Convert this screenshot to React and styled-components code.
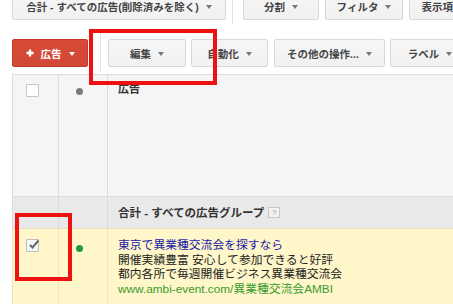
import React from "react";
import styled, { createGlobalStyle } from "styled-components";

const Global = createGlobalStyle`
  html, body { margin: 0; padding: 0; background: #fff; overflow: hidden; }
  body { font-family: "Liberation Sans", "Noto Sans CJK JP", sans-serif; }
`;

const Page = styled.div`
  position: relative;
  width: 453px;
  height: 304px;
  overflow: hidden;
  padding-left: 12px;
  box-sizing: border-box;
`;

const Toolbar = styled.div`
  display: flex;
  align-items: stretch;
  height: 28px;
  margin-top: ${(p) => p.$mt}px;
  white-space: nowrap;
`;

const Button = styled.div`
  flex: none;
  width: ${(p) => p.$w}px;
  margin-left: ${(p) => p.$ml || 0}px;
  box-sizing: border-box;
  display: flex;
  align-items: center;
  justify-content: center;
  gap: 7px;
  border: 1px solid ${(p) => (p.$primary ? "#c53727" : "#d9d9d9")};
  border-radius: 2px;
  background: ${(p) =>
    p.$primary ? "linear-gradient(#d94a38, #d14836)" : "linear-gradient(#f6f6f6, #f1f1f1)"};
  color: ${(p) => (p.$primary ? "#fff" : "#444")};
  font-size: 10.5px;
  font-weight: bold;
`;

const Caret = styled.span`
  width: 0;
  height: 0;
  border-left: 3.5px solid transparent;
  border-right: 3.5px solid transparent;
  border-top: 4px solid ${(p) => (p.$light ? "#fff" : "#777")};
  margin-top: 1px;
`;

const Separator = styled.div`
  flex: none;
  width: 1px;
  background: #e3e3e3;
  margin: -6px ${(p) => p.$mr}px -4px ${(p) => p.$ml}px;
`;

const Table = styled.div`
  margin-top: 7px;
  border-top: 1px solid #dcdcdc;
  width: 460px;
`;

const Row = styled.div`
  display: grid;
  grid-template-columns: 46px 49px 1fr;
  height: ${(p) => p.$h}px;
  background: ${(p) => p.$bg};
  border-bottom: 1px solid ${(p) => p.$line || "#dcdcdc"};
  box-sizing: border-box;
`;

const Cell = styled.div`
  border-left: 1px solid ${(p) => p.$line || "#dcdcdc"};
  padding: ${(p) => p.$pad};
  box-sizing: border-box;
  display: flex;
  flex-direction: column;
  align-items: flex-start;
  justify-content: ${(p) => (p.$center ? "center" : "flex-start")};
`;

const Checkbox = styled.div`
  width: 13px;
  height: 13px;
  box-sizing: border-box;
  border: 1px solid ${(p) => (p.$checked ? "#bdbdbd" : "#c6c6c6")};
  background: ${(p) => (p.$checked ? "#f7f7f7" : "#fff")};
  border-radius: 1px;
  position: relative;
  svg { position: absolute; left: 1px; top: -1px; }
`;

const Dot = styled.div`
  width: 7px;
  height: 7px;
  border-radius: 50%;
  background: ${(p) => p.$color};
`;

const HeadText = styled.div`
  font-size: 11px;
  font-weight: bold;
  color: #333;
  line-height: 14px;
`;

const GroupText = styled.div`
  display: flex;
  align-items: center;
  gap: 4px;
  font-size: 11.5px;
  font-weight: bold;
  color: #333;
`;

const Help = styled.span`
  width: 12px;
  height: 11px;
  box-sizing: border-box;
  border: 1px solid #c8c8c8;
  background: #f2f2f2;
  color: #999;
  font-size: 8px;
  display: inline-flex;
  align-items: center;
  justify-content: center;
  font-weight: normal;
`;

const AdLine = styled.div`
  font-size: 11.8px;
  line-height: 14.5px;
  white-space: nowrap;
  color: ${(p) => p.$color || "#222"};
`;

const Highlight = styled.div`
  position: absolute;
  left: ${(p) => p.$x}px;
  top: ${(p) => p.$y}px;
  width: ${(p) => p.$w}px;
  height: ${(p) => p.$h}px;
  border: 4px solid #ee1111;
  box-sizing: border-box;
  pointer-events: none;
`;

const PlusIcon = () => (
  <svg width="8" height="8" viewBox="0 0 8 8">
    <path d="M4 0.5V7.5M0.5 4H7.5" stroke="#fff" strokeWidth="2.4" />
  </svg>
);

const CheckIcon = () => (
  <svg width="12" height="11" viewBox="0 0 12 11">
    <path d="M2 6L4.5 8.5L10.5 1.5" stroke="#666" strokeWidth="2" fill="none" />
  </svg>
);

export default function App() {
  return (
    <>
      <Global />
      <Page>
        <Toolbar $mt={-8}>
          <Button $w={214}>
            合計 - すべての広告(削除済みを除く)
            <Caret />
          </Button>
          <Separator $ml={6} $mr={10} />
          <Button $w={76}>
            分割
            <Caret />
          </Button>
          <Button $w={78} $ml={6}>
            フィルタ
            <Caret />
          </Button>
          <Button $w={80} $ml={6}>
            表示項目
            <Caret />
          </Button>
        </Toolbar>
        <Toolbar $mt={19}>
          <Button $w={76} $primary>
            <PlusIcon />
            広告
            <Caret $light />
          </Button>
          <Separator $ml={12} $mr={7} />
          <Button $w={78}>
            編集
            <Caret />
          </Button>
          <Button $w={77} $ml={5}>
            自動化
            <Caret />
          </Button>
          <Button $w={111} $ml={6}>
            その他の操作...
            <Caret />
          </Button>
          <Button $w={80} $ml={5}>
            ラベル
            <Caret />
          </Button>
        </Toolbar>
        <Table>
          <Row $h={122} $bg="#f5f5f5">
            <Cell $pad="9px 0 0 13px">
              <Checkbox />
            </Cell>
            <Cell $pad="13px 0 0 17px">
              <Dot $color="#7a7a7a" />
            </Cell>
            <Cell $pad="7px 0 0 10px">
              <HeadText>広告</HeadText>
            </Cell>
          </Row>
          <Row $h={32} $bg="#e9e9e9" $line="#e2dcc0">
            <Cell />
            <Cell />
            <Cell $pad="0 0 1px 10px" $center>
              <GroupText>
                合計 - すべての広告グループ
                <Help>?</Help>
              </GroupText>
            </Cell>
          </Row>
          <Row $h={100} $bg="#fff6c9" $line="#fff6c9">
            <Cell $pad="10px 0 0 13px" $line="#ece5c2">
              <Checkbox $checked>
                <CheckIcon />
              </Checkbox>
            </Cell>
            <Cell $pad="16px 0 0 17px" $line="#ece5c2">
              <Dot $color="#1f9d40" />
            </Cell>
            <Cell $pad="9px 0 0 10px" $line="#ece5c2">
              <AdLine $color="#1a1aa8">東京で異業種交流会を探すなら</AdLine>
              <AdLine>開催実績豊富 安心して参加できると好評</AdLine>
              <AdLine>都内各所で毎週開催ビジネス異業種交流会</AdLine>
              <AdLine $color="#3a9a2e">www.ambi-event.com/異業種交流会AMBI</AdLine>
            </Cell>
          </Row>
        </Table>
        <Highlight $x={89} $y={29} $w={128} $h={56} />
        <Highlight $x={15} $y={213} $w={57} $h={68} />
      </Page>
    </>
  );
}
